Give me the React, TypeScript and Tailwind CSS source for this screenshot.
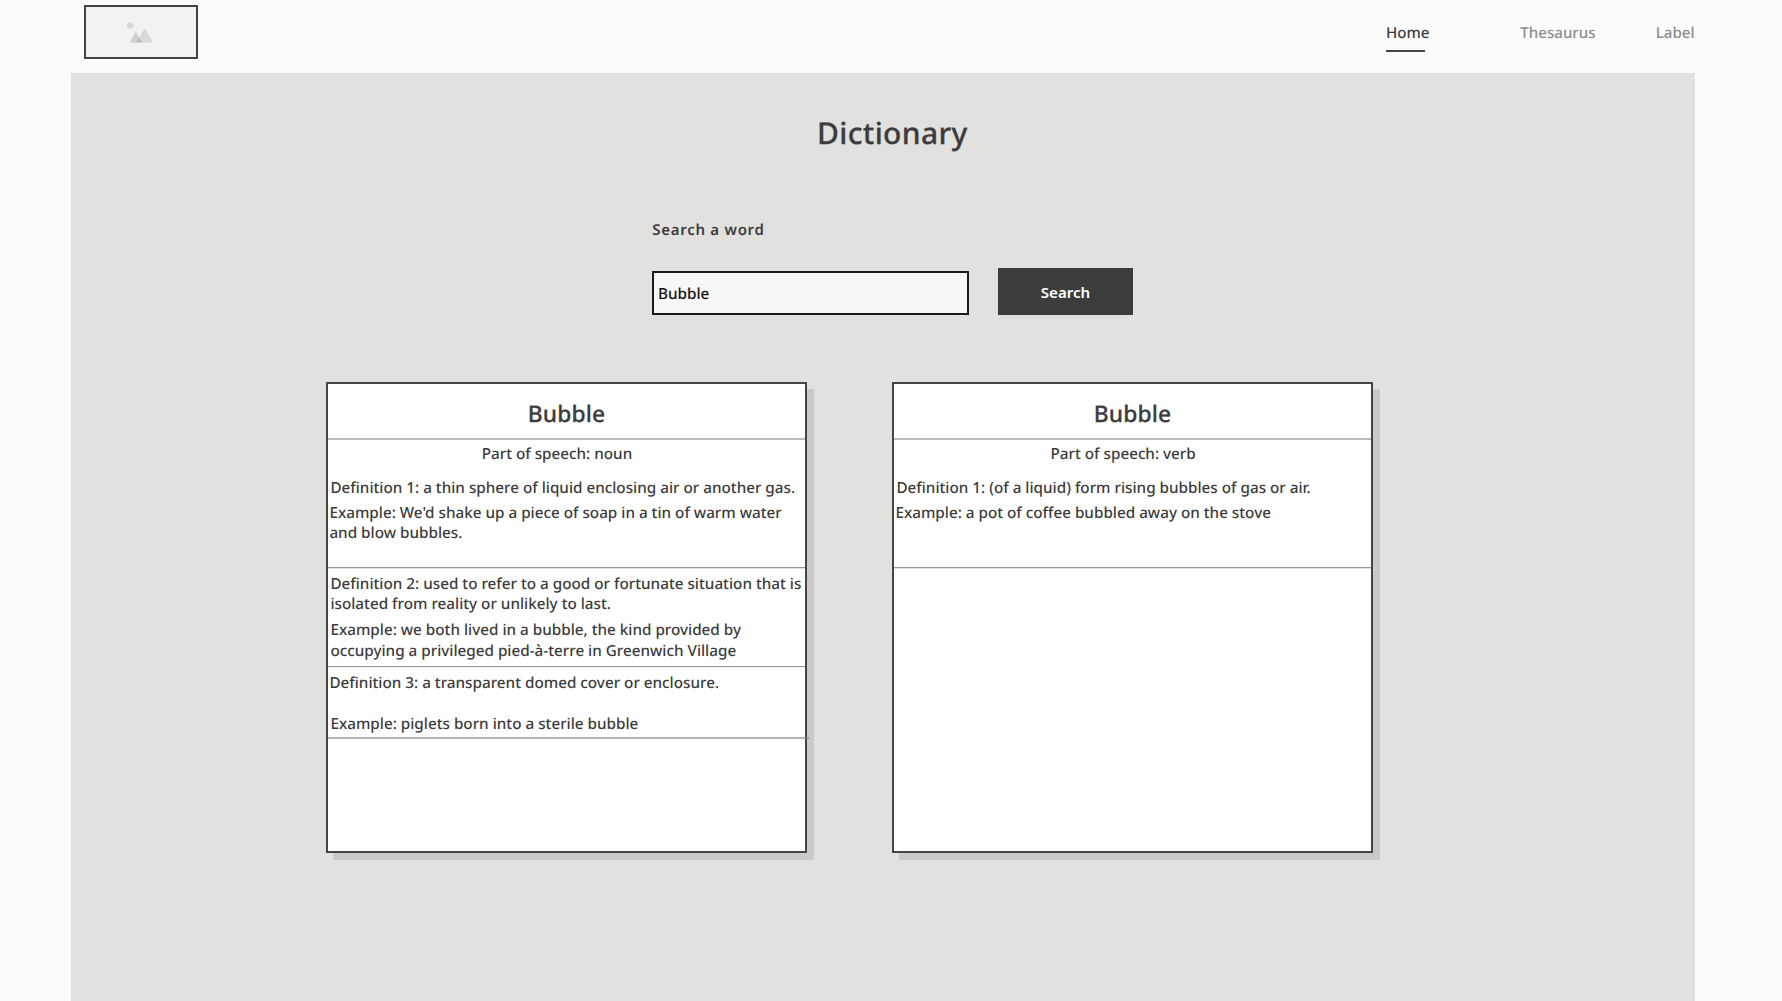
import type { ReactNode } from "react";

function Line({ children, className = "" }: { children: ReactNode; className?: string }) {
  return <p className={`h-5 whitespace-nowrap ${className}`}>{children}</p>;
}

function Card({ part, children }: { part: ReactNode; children: ReactNode }) {
  return (
    <article className="h-[471px] w-[481px] border-2 border-[#454545] bg-white text-[15.25px] leading-5 font-medium shadow-[7px_7px_0_#cbc9c9]">
      <h2 className="h-[54px] pt-[14px] text-center text-[22.8px] leading-8 font-medium tracking-[0.1px] [-webkit-text-stroke:0.25px_#3c3c3c]">Bubble</h2>
      <hr className="h-0.5 border-0 bg-[#bcbcbc]" />
      {part}
      {children}
    </article>
  );
}

function Divider({ className = "" }: { className?: string }) {
  return <hr className={`h-0.5 border-0 ${className}`} />;
}

export default function App() {
  return (
    <div className="flex h-[1001px] w-[1782px] flex-col overflow-hidden bg-[#fbfbfb] font-['Noto_Sans',sans-serif] text-[#3c3c3c] [text-rendering:geometricPrecision]">
      <header className="flex h-[73px] shrink-0 justify-between pr-[87px] pl-[84px]">
        <div className="mt-[5px] flex h-[54px] w-[114px] items-center justify-center border-2 border-[#454545] bg-[#f2f2f2]">
          <svg width="26" height="21" viewBox="0 0 26 21" className="mt-px mr-0.5">
            <circle cx="3.2" cy="3.5" r="3.3" fill="#d8d8d8" />
            <path d="M17.5 6 L26 20.5 H9.5 Z" fill="#d8d8d8" />
            <path d="M8.7 9.5 L15 20.5 H2.5 Z" fill="#d0d0d0" />
            <path d="M12 15.5 L15 20.5 H9.5 Z" fill="#bcbcbc" />
          </svg>
        </div>
        <nav className="flex pt-[23px] text-[15.1px] leading-5 font-[550] text-[#8c8c8c]">
          <a className="h-[30px] w-[134.3px] text-[#3c3c3c]">
            Home
            <span className="mt-[7px] block h-0.5 w-[39px] bg-[#454545]" />
          </a>
          <a className="w-[135px]">Thesaurus</a>
          <a className="w-[39.7px] pl-[0.5px]">Label</a>
        </nav>
      </header>
      <main className="ml-[71px] h-[928px] w-[1624px] bg-[#e2e1df]">
        <h1 className="ml-[746px] h-[147px] pt-10 text-[30px] leading-10 font-medium tracking-[0.35px] [-webkit-text-stroke:0.25px_#3c3c3c]">Dictionary</h1>
        <div className="ml-[581px]">
          <label className="block h-12 pl-[0.3px] text-[15px] leading-5 font-semibold tracking-[0.72px]">Search a word</label>
          <div className="flex items-end">
            <div className="flex h-11 w-[317px] items-center border-2 border-[#1a1a1a] bg-[#f7f7f7] pt-0.5 pl-1 text-[15.25px] leading-5 font-medium text-[#111]">
              Bubble
            </div>
            <button className="ml-[29px] h-[47px] w-[135px] bg-[#3c3c3c] text-[15.1px] leading-5 font-semibold text-white">
              Search
            </button>
          </div>
        </div>
        <div className="mt-[67px] flex gap-[85px] pl-[255px]">
          <Card part={<Line className="mt-1 ml-[153.7px]">Part of speech: noun</Line>}>
            <section className="h-[103px] pt-[14px]">
              <Line className="ml-[2.4px]">Definition 1: a thin sphere of liquid enclosing air or another gas.</Line>
              <Line className="mt-[5px] ml-[1.4px]">Example: We'd shake up a piece of soap in a tin of warm water</Line>
              <Line className="ml-[1.4px]">and blow bubbles.</Line>
            </section>
            <Divider className="border-t border-[#999] bg-[#dedede]" />
            <section className="h-[97px] pt-[5px]">
              <Line className="ml-[2.4px]">Definition 2: used to refer to a good or fortunate situation that is</Line>
              <Line className="ml-[2.4px]">isolated from reality or unlikely to last.</Line>
              <Line className="mt-[6px] ml-[2.4px]">Example: we both lived in a bubble, the kind provided by</Line>
              <Line className="mt-px ml-[2.4px]">occupying a privileged pied-à-terre in Greenwich Village</Line>
            </section>
            <Divider className="border-t border-[#999] bg-[#ededed]" />
            <section className="h-[69px] pt-[5px]">
              <Line className="ml-[1.4px]">Definition 3: a transparent domed cover or enclosure.</Line>
              <Line className="mt-[21px] ml-[2.4px]">Example: piglets born into a sterile bubble</Line>
            </section>
            <Divider className="w-[481px] bg-[#808080]/60" />
          </Card>
          <Card part={<Line className="mt-1 ml-[156.5px]">Part of speech: verb</Line>}>
            <section className="h-[103px] pt-[14px]">
              <Line className="ml-[2.4px]">Definition 1: (of a liquid) form rising bubbles of gas or air.</Line>
              <Line className="mt-[5px] ml-[1.4px]">Example: a pot of coffee bubbled away on the stove</Line>
            </section>
            <Divider className="border-t border-[#999] bg-[#dedede]" />
          </Card>
        </div>
      </main>
    </div>
  );
}
